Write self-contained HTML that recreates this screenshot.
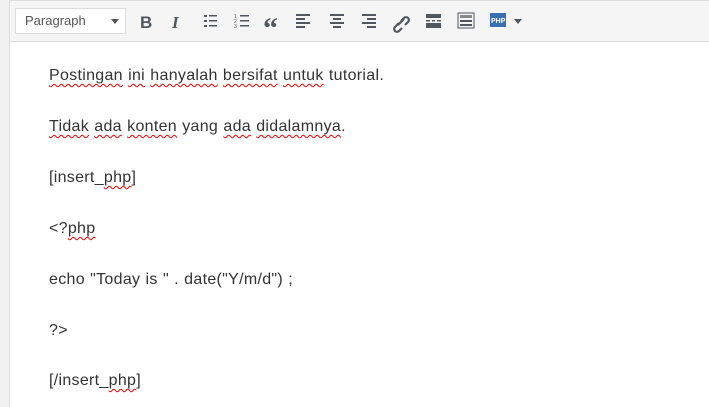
<!DOCTYPE html>
<html><head><style>
body{margin:0;width:709px;height:407px;overflow:hidden;background:#fff;font-family:"Liberation Sans",sans-serif;position:relative}
.strip{position:absolute;left:0;top:0;width:9px;height:407px;background:#f1f1f1;border-right:1px solid #ddd}
.tb{position:absolute;left:10px;top:0;right:0;height:40px;background:#f5f5f5;border-top:1px solid #ddd;border-bottom:1px solid #ddd}
.sel{position:absolute;left:15px;top:8px;width:111px;height:26px;background:#fff;border:1px solid #ddd;box-sizing:border-box;font-size:13px;color:#555;line-height:24px;padding-left:9px}
.sel:after{content:"";position:absolute;right:6px;top:10px;border-left:4px solid transparent;border-right:4px solid transparent;border-top:5px solid #555}
.t{position:absolute;left:49px;font-size:16px;letter-spacing:0.3px;word-spacing:0.5px;color:#333;white-space:nowrap}
.w{text-decoration:underline wavy #e00;text-decoration-thickness:1px;text-underline-offset:3px}
</style></head><body>
<div class="strip"></div>
<div class="tb"></div>
<div class="sel">Paragraph</div>
<svg width="709" height="42" style="position:absolute;left:0;top:0" fill="#50575e" stroke="#50575e">
<text x="140" y="28" font-size="17" font-weight="bold" stroke="none" font-family="Liberation Sans">B</text>
<text x="172" y="28" font-size="17" font-style="italic" font-weight="bold" stroke="none" font-family="Liberation Serif">I</text>
<g stroke="none"><rect x="204" y="15" width="3" height="2"/><rect x="204" y="20" width="3" height="2"/><rect x="204" y="25" width="3" height="2"/><rect x="209" y="15" width="8" height="1.5"/><rect x="209" y="20" width="8" height="1.5"/><rect x="209" y="25" width="8" height="1.5"/>
<text x="234" y="18" font-size="5">1</text><text x="234" y="23" font-size="5">2</text><text x="234" y="28" font-size="5">3</text>
<rect x="240" y="15" width="9" height="1.5"/><rect x="240" y="20" width="9" height="1.5"/><rect x="240" y="25" width="9" height="1.5"/>
<text x="263" y="38" font-size="30" font-weight="bold" font-family="Liberation Serif">“</text>
<rect x="296" y="14" width="14" height="2"/><rect x="296" y="18" width="9" height="2"/><rect x="296" y="22" width="14" height="2"/><rect x="296" y="26" width="9" height="2"/>
<rect x="330" y="14" width="14" height="2"/><rect x="333" y="18" width="8" height="2"/><rect x="330" y="22" width="14" height="2"/><rect x="333" y="26" width="8" height="2"/>
<rect x="362" y="14" width="14" height="2"/><rect x="367" y="18" width="9" height="2"/><rect x="362" y="22" width="14" height="2"/><rect x="367" y="26" width="9" height="2"/>
<rect x="426" y="14" width="15" height="4"/><rect x="426" y="20" width="4" height="1.5"/><rect x="432" y="20" width="3" height="1.5"/><rect x="437" y="20" width="4" height="1.5"/><rect x="426" y="23" width="15" height="5"/>
<rect x="458" y="13" width="16" height="15" fill="none" stroke="#50575e" stroke-width="1"/><rect x="460" y="15" width="12" height="3" fill="#888"/><rect x="460" y="20" width="12" height="2"/><rect x="460" y="24" width="12" height="2"/>
<rect x="490" y="13" width="16" height="14" fill="#3a6fb0"/><text x="491" y="23" font-size="7" font-weight="bold" fill="#fff">PHP</text>
<path d="M514 19h8l-4 5z"/></g>
<g fill="none" stroke-width="2.2"><path d="M396 26l3-3m2-2l3-3a2.5 2.5 0 0 1 4 4l-3 3m-3 3l-3 3a2.5 2.5 0 0 1-4-4l3-3"/><path d="M398 25l6-6"/></g>
</svg>
<div class="t" style="top:67px"><span class="w">Postingan</span> <span class="w">ini</span> <span class="w">hanyalah</span> <span class="w">bersifat</span> <span class="w">untuk</span> tutorial.</div>
<div class="t" style="top:118px"><span class="w">Tidak</span> <span class="w">ada</span> <span class="w">konten</span> yang <span class="w">ada</span> <span class="w">didalamnya</span>.</div>
<div class="t" style="top:169px">[insert_<span class="w">php</span>]</div>
<div class="t" style="top:220px">&lt;?<span class="w">php</span></div>
<div class="t" style="top:271px">echo "Today is " . date("Y/m/d") ;</div>
<div class="t" style="top:322px">?&gt;</div>
<div class="t" style="top:372px">[/insert_<span class="w">php</span>]</div>
</body></html>
